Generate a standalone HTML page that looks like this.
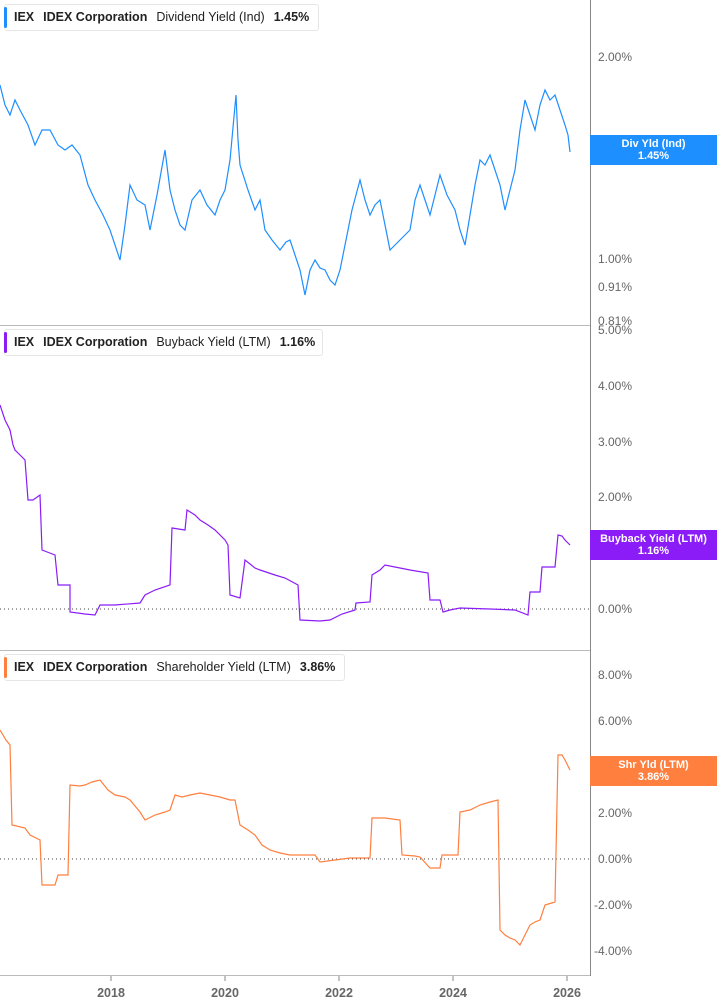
<!DOCTYPE html>
<html><head><meta charset="utf-8"><style>
body{margin:0;width:717px;height:1005px;background:#fff;font-family:"Liberation Sans",sans-serif;overflow:hidden;position:relative}
.leg{position:absolute;left:4px;height:25px;border:1px solid #e6e6e6;border-radius:3px;background:#fff;font-size:12.5px;color:#222;line-height:25px;padding-left:9px;white-space:nowrap}
.leg:before{content:"";position:absolute;left:-1px;top:2px;bottom:2px;width:3px;border-radius:2px;background:var(--c)}
.leg b{font-weight:bold;margin-right:9px}
.leg span{margin-right:9px}
.tag{position:absolute;left:590px;width:127px;color:#fff;font-weight:bold;font-size:11px;text-align:center;line-height:12px;padding:3px 0}
</style></head><body>
<svg width="717" height="1005" style="position:absolute;left:0;top:0" font-family="Liberation Sans, sans-serif" font-size="12" fill="#555">
<g stroke="#bbb" stroke-width="1"><line x1="0" y1="325.5" x2="590" y2="325.5"/><line x1="0" y1="650.5" x2="590" y2="650.5"/><line x1="0" y1="975.5" x2="590" y2="975.5"/></g>
<line x1="590.5" y1="0" x2="590.5" y2="976" stroke="#888"/>
<g stroke="#888"><line x1="111" y1="976" x2="111" y2="981"/><line x1="225" y1="976" x2="225" y2="981"/><line x1="339" y1="976" x2="339" y2="981"/><line x1="453" y1="976" x2="453" y2="981"/><line x1="567" y1="976" x2="567" y2="981"/></g>
<g stroke="#444" stroke-dasharray="1,3"><line x1="0" y1="609" x2="590" y2="609"/><line x1="0" y1="859" x2="590" y2="859"/></g>
<g fill="#666">
<text x="598" y="61">2.00%</text><text x="598" y="263">1.00%</text><text x="598" y="291">0.91%</text><text x="598" y="325">0.81%</text>
<text x="598" y="334">5.00%</text><text x="598" y="390">4.00%</text><text x="598" y="446">3.00%</text><text x="598" y="501">2.00%</text><text x="598" y="556">1.00%</text><text x="598" y="613">0.00%</text>
<text x="598" y="679">8.00%</text><text x="598" y="725">6.00%</text><text x="598" y="771">4.00%</text><text x="598" y="817">2.00%</text><text x="598" y="863">0.00%</text><text x="594" y="909">-2.00%</text><text x="594" y="955">-4.00%</text>
</g>
<g fill="#666" font-weight="bold" font-size="12.5" text-anchor="middle"><text x="111" y="997">2018</text><text x="225" y="997">2020</text><text x="339" y="997">2022</text><text x="453" y="997">2024</text><text x="567" y="997">2026</text></g>
<polyline fill="none" stroke="#1e8fff" stroke-width="1.2" points="0,85 5,105 10,115 15,100 20,110 28,125 35,145 42,130 50,130 58,145 65,150 72,145 80,155 88,185 95,200 103,215 110,230 115,245 120,260 125,225 130,185 137,200 145,205 150,230 157,195 165,150 170,190 175,210 180,225 185,230 192,200 200,190 207,205 215,215 220,200 225,190 230,160 236,95 238,140 240,165 248,190 255,210 260,200 265,230 272,240 280,250 286,242 290,240 295,255 300,270 303,285 305,295 310,270 315,260 320,268 325,270 330,280 335,285 340,270 345,245 352,210 360,180 365,200 370,215 375,205 380,200 385,225 390,250 395,245 400,240 405,235 410,230 415,200 420,185 425,200 430,215 435,195 440,175 447,195 455,210 460,230 465,245 470,215 475,185 480,160 485,165 490,155 495,170 500,185 503,200 505,210 510,190 515,170 520,130 525,100 530,115 535,130 540,105 545,90 550,100 555,95 560,110 565,125 568,135 570,152"/>
<polyline fill="none" stroke="#8b1cf7" stroke-width="1.2" points="0,405 5,420 10,430 13,445 15,450 20,455 25,460 28,500 33,500 40,495 42,550 55,555 58,585 70,585 70,612 85,614 95,615 100,605 115,605 140,603 145,595 155,590 170,585 172,528 185,530 187,510 195,515 200,520 208,525 215,530 225,540 228,545 230,595 240,598 245,560 255,568 260,570 275,575 285,578 298,585 300,620 320,621 330,620 342,614 355,610 356,603 370,602 372,575 380,570 385,565 400,568 410,570 428,573 430,600 440,600 443,612 450,610 460,608 490,609 515,610 528,615 530,592 540,592 542,567 555,567 558,535 562,536 565,540 570,545"/>
<polyline fill="none" stroke="#ff7f3f" stroke-width="1.2" points="0,730 6,740 10,745 12,825 25,828 30,835 40,840 42,885 55,885 58,875 68,875 70,785 80,786 85,785 92,782 100,780 108,790 115,795 125,797 130,800 140,812 145,820 155,815 165,812 170,810 175,795 182,797 190,795 200,793 210,795 220,797 230,800 235,800 240,825 248,830 255,835 262,845 270,850 280,853 290,855 300,855 315,855 320,862 335,860 350,858 360,858 370,858 372,818 385,818 400,820 402,855 415,856 420,857 430,868 440,868 442,855 458,855 460,812 470,810 480,805 490,802 498,800 500,930 505,935 510,938 515,940 520,945 525,935 530,925 535,922 540,920 545,905 555,902 558,755 562,755 565,760 570,770"/>
</svg>
<div class="leg" style="top:4px;width:304px;--c:#1e8fff"><b>IEX</b><b>IDEX Corporation</b><span>Dividend Yield (Ind)</span><b>1.45%</b></div>
<div class="leg" style="top:329px;width:308px;--c:#8b1cf7"><b>IEX</b><b>IDEX Corporation</b><span>Buyback Yield (LTM)</span><b>1.16%</b></div>
<div class="leg" style="top:654px;width:330px;--c:#ff7f3f"><b>IEX</b><b>IDEX Corporation</b><span>Shareholder Yield (LTM)</span><b>3.86%</b></div>
<div class="tag" style="top:135px;background:#1e8fff">Div Yld (Ind)<br>1.45%</div>
<div class="tag" style="top:530px;background:#8b1cf7">Buyback Yield (LTM)<br>1.16%</div>
<div class="tag" style="top:756px;background:#ff7f3f">Shr Yld (LTM)<br>3.86%</div>
</body></html>
